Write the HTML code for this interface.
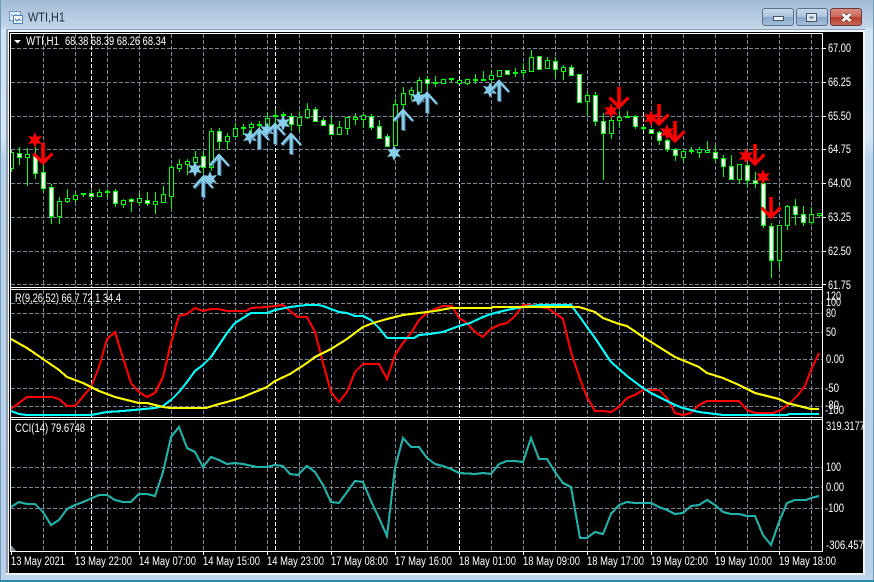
<!DOCTYPE html>
<html><head><meta charset="utf-8"><style>
html,body{margin:0;padding:0;width:874px;height:582px;overflow:hidden;background:#bcd3ea}
svg{display:block}
text{font-family:"Liberation Sans",sans-serif;font-size:11.5px;fill:#fff}
.c{shape-rendering:crispEdges}
</style></head><body>
<svg width="874" height="582" viewBox="0 0 874 582" xmlns="http://www.w3.org/2000/svg">
<defs>
<linearGradient id="top" x1="0" y1="0" x2="0" y2="1"><stop offset="0" stop-color="#a3bbd6"/><stop offset="1" stop-color="#c4d7ea"/></linearGradient>
<linearGradient id="side" x1="0" y1="0" x2="0" y2="1"><stop offset="0" stop-color="#d2e2f2"/><stop offset=".2" stop-color="#d8e6f4"/><stop offset=".24" stop-color="#bad2ea"/><stop offset="1" stop-color="#b9d1ea"/></linearGradient>
<linearGradient id="btn" x1="0" y1="0" x2="0" y2="1"><stop offset="0" stop-color="#c9d9ea"/><stop offset=".48" stop-color="#adc3dc"/><stop offset=".52" stop-color="#88a6c8"/><stop offset="1" stop-color="#a6c2de"/></linearGradient>
<linearGradient id="cls" x1="0" y1="0" x2="0" y2="1"><stop offset="0" stop-color="#dc8f82"/><stop offset=".48" stop-color="#cc6a5c"/><stop offset=".52" stop-color="#b83c2c"/><stop offset="1" stop-color="#c86a58"/></linearGradient>
<polygon id="st" points="0,-8 1.9,-3.3 6.9,-4 3.8,0 6.9,4 1.9,3.3 0,8 -1.9,3.3 -6.9,4 -3.8,0 -6.9,-4 -1.9,-3.3"/>
<g id="dn" fill="none" stroke="#f00"><path stroke-width="3.6" d="M0 -21V-1"/><path stroke-width="3.2" d="M-9.5 -10.5L0 -1L9.5 -10.5"/></g>
<g id="up" fill="none"><g stroke="#4f7fa6" transform="translate(1,1)"><path stroke-width="3" d="M0 2V21"/><path stroke-width="2.2" d="M-9.5 11.5L0 1L9.5 11.5"/></g><g stroke="#87ceeb"><path stroke-width="3" d="M0 2V21"/><path stroke-width="2.4" d="M-9.5 11.5L0 1L9.5 11.5"/></g></g>
</defs>

<!-- window chrome -->
<rect width="874" height="582" fill="#bcd3ea"/>
<rect width="874" height="29" fill="url(#top)"/>
<rect x="0" y="28" width="7" height="545" fill="url(#side)"/>
<rect x="865" y="28" width="9" height="545" fill="url(#side)"/>
<rect x="0" y="0" width="1" height="582" fill="#6f9cb8"/>
<rect x="873" y="0" width="1" height="582" fill="#6f9cb8"/>
<rect x="0" y="580" width="874" height="2" fill="#2f8aa8"/>
<rect x="6" y="29" width="859" height="546" fill="#f2f6fa"/>
<rect x="6" y="29" width="859" height="1" fill="#8ea3b8"/>
<rect x="6" y="29" width="2" height="544" fill="#8f9fae"/>
<rect x="9" y="32" width="854" height="541" fill="#000"/>

<!-- title icon -->
<g class="c">
<rect x="9.5" y="11.5" width="11" height="9" fill="#dcebf8" stroke="#6f94bc"/>
<rect x="13.5" y="15.5" width="9" height="8" fill="#f4f9fe" stroke="#4b83bb"/>
<path d="M15 19l2 2 2-2 2 2" stroke="#3a78b8" fill="none"/>
<path d="M11 15h2m2 0h2" stroke="#6f94bc"/>
</g>
<text x="28" y="21.5" style="font-size:12.5px;fill:#1e2c3c" textLength="37" lengthAdjust="spacingAndGlyphs">WTI,H1</text>

<!-- buttons -->
<rect x="762.5" y="8.5" width="31" height="17" rx="2.5" fill="url(#btn)" stroke="#5d7189"/>
<rect x="773.5" y="16.5" width="10" height="4" fill="#eef3f8" stroke="#46586c" class="c"/>
<rect x="796.5" y="8.5" width="31" height="17" rx="2.5" fill="url(#btn)" stroke="#5d7189"/>
<rect x="806.5" y="13.5" width="10" height="8" fill="#dfe7ef" stroke="#46586c" class="c"/>
<rect x="809.5" y="16.5" width="4" height="2" fill="#64788e" class="c"/>
<rect x="830.5" y="8.5" width="31" height="17" rx="2.5" fill="url(#cls)" stroke="#6d3a40"/>
<path d="M842.5 14l8 7M850.5 14l-8 7" stroke="#4a3a3a" stroke-width="4.4" fill="none"/>
<path d="M842.5 14l8 7M850.5 14l-8 7" stroke="#f4f1ee" stroke-width="3" fill="none"/>

<!-- grid -->
<g class="c" fill="none" stroke="#778899" stroke-dasharray="4 2">
<path d="M11 48.5H822M11 82.5H822M11 116.5H822M11 149.5H822M11 183.5H822M11 217.5H822M11 251.5H822M11 284.5H822"/>
<path d="M11 303.5H822M11 313.5H822M11 332.5H822M11 359.5H822M11 388.5H822M11 406.5H822"/>
<path d="M11 467.5H822M11 487.5H822M11 508.5H822"/>
<path id="gv" d="M43.5 34V287M75.5 34V287M107.5 34V287M139.5 34V287M171.5 34V287M203.5 34V287M235.5 34V287M267.5 34V287M299.5 34V287M331.5 34V287M363.5 34V287M395.5 34V287M427.5 34V287M491.5 34V287M523.5 34V287M555.5 34V287M587.5 34V287M619.5 34V287M651.5 34V287M683.5 34V287M715.5 34V287M747.5 34V287M779.5 34V287M811.5 34V287"/>
<path d="M43.5 290V417M75.5 290V417M107.5 290V417M139.5 290V417M171.5 290V417M203.5 290V417M235.5 290V417M267.5 290V417M299.5 290V417M331.5 290V417M363.5 290V417M395.5 290V417M427.5 290V417M491.5 290V417M523.5 290V417M555.5 290V417M587.5 290V417M619.5 290V417M651.5 290V417M683.5 290V417M715.5 290V417M747.5 290V417M779.5 290V417M811.5 290V417"/>
<path d="M43.5 420V551M75.5 420V551M107.5 420V551M139.5 420V551M171.5 420V551M203.5 420V551M235.5 420V551M267.5 420V551M299.5 420V551M331.5 420V551M363.5 420V551M395.5 420V551M427.5 420V551M491.5 420V551M523.5 420V551M555.5 420V551M587.5 420V551M619.5 420V551M651.5 420V551M683.5 420V551M715.5 420V551M747.5 420V551M779.5 420V551M811.5 420V551"/>
<path stroke="#fff" d="M91.5 34V287M275.5 34V287M459.5 34V287M643.5 34V287M91.5 290V417M275.5 290V417M459.5 290V417M643.5 290V417M91.5 420V551M275.5 420V551M459.5 420V551M643.5 420V551"/>
</g>

<!-- candles -->
<g fill="none" stroke="#00ff00" stroke-width="1">
<path d="M11.5 150V172M19.5 147V165M27.5 148V186M35.5 147V179M43.5 160V192M51.5 184V224M59.5 197V224M67.5 189V203M75.5 192V203M83.5 193V197M91.5 189V199M99.5 189V197M107.5 189V198M115.5 189V207M123.5 199V208M131.5 198V212M139.5 193V205M147.5 192V206M155.5 192V214M163.5 186V202M171.5 165V209M179.5 159V172M187.5 159V175M195.5 151V165M203.5 151V174M211.5 128V171M219.5 128V150M227.5 133V150M235.5 123V137M243.5 124V135M251.5 122V133M259.5 121V133M267.5 113V128M275.5 109V125M283.5 112V122M291.5 113V131M299.5 111V132M307.5 103V119M315.5 107V121M323.5 118V126M331.5 117V134M339.5 121V135M347.5 117V135M355.5 113V125M363.5 114V128M371.5 114V130M379.5 120V139M387.5 134V147M395.5 99V146M403.5 87V110M411.5 87V100M419.5 77V95M427.5 76V90M435.5 76V87M443.5 79V83M451.5 79V83M459.5 80V84M467.5 79V85M475.5 74V84M483.5 71V80M491.5 70V82M499.5 70V76M507.5 70V75M515.5 68V77M523.5 63V77M531.5 50V72M539.5 56V69M547.5 57V69M555.5 57V78M563.5 65V80M571.5 65V76M579.5 74V102M587.5 92V116M595.5 92V126M603.5 113V180M611.5 113V139M619.5 111V128M627.5 111V118M635.5 115V129M643.5 126V131M651.5 129V133M659.5 131V145M667.5 139V152M675.5 148V161M683.5 148V162M691.5 147V154M699.5 147V158M707.5 141V153M715.5 145V162M723.5 155V177M731.5 155V180M739.5 164V183M747.5 163V187M755.5 172V188M763.5 183V228M771.5 223V278M779.5 225V269M787.5 205V230M795.5 199V225M803.5 206V226M811.5 207V225M819.5 213V218"/>
<path stroke-width="2" d="M81 194H86M105 192H110M241 128H246M257 125H262M273 116H278M281 115H286M433 83H438M449 79H454M473 80H478M481 80H486M513 73H518M625 117H630M641 128H646M689 151H694"/>
<path fill="#000" d="M11 152.5H13.5V168.5H11M25.5 154.5h4v3h-4zM57.5 201.5h4v15h-4zM65.5 198.5h4v3h-4zM73.5 195.5h4v4h-4zM97.5 192.5h4v4h-4zM121.5 200.5h4v4h-4zM137.5 198.5h4v4h-4zM153.5 201.5h4v3h-4zM161.5 194.5h4v8h-4zM169.5 167.5h4v29h-4zM177.5 164.5h4v4h-4zM185.5 161.5h4v3h-4zM193.5 157.5h4v5h-4zM209.5 131.5h4v36h-4zM225.5 136.5h4v5h-4zM233.5 128.5h4v8h-4zM249.5 124.5h4v3h-4zM265.5 118.5h4v7h-4zM297.5 117.5h4v8h-4zM305.5 109.5h4v8h-4zM337.5 127.5h4v7h-4zM345.5 117.5h4v11h-4zM353.5 117.5h4v2h-4zM361.5 115.5h4v4h-4zM393.5 104.5h4v41h-4zM401.5 93.5h4v11h-4zM409.5 90.5h4v4h-4zM417.5 80.5h4v12h-4zM441.5 79.5h4v4h-4zM457.5 80.5h4v3h-4zM465.5 79.5h4v4h-4zM489.5 75.5h4v4h-4zM497.5 70.5h4v6h-4zM521.5 70.5h4v2h-4zM529.5 57.5h4v14h-4zM545.5 60.5h4v8h-4zM561.5 67.5h4v4h-4zM585.5 95.5h4v6h-4zM609.5 120.5h4v13h-4zM617.5 117.5h4v3h-4zM681.5 151.5h4v6h-4zM697.5 149.5h4v3h-4zM705.5 150.5h4v2h-4zM737.5 164.5h4v15h-4zM777.5 225.5h4v35h-4zM785.5 206.5h4v19h-4zM809.5 214.5h4v8h-4zM817.5 213.5h4v2h-4z"/>
<path fill="#fff" d="M17.5 153.5h4v4h-4zM33.5 156.5h4v17h-4zM41.5 172.5h4v16h-4zM49.5 187.5h4v29h-4zM89.5 193.5h4v3h-4zM113.5 191.5h4v12h-4zM129.5 199.5h4v2h-4zM145.5 200.5h4v3h-4zM201.5 156.5h4v11h-4zM217.5 131.5h4v10h-4zM289.5 116.5h4v8h-4zM313.5 109.5h4v12h-4zM321.5 120.5h4v5h-4zM329.5 124.5h4v10h-4zM369.5 116.5h4v11h-4zM377.5 126.5h4v12h-4zM385.5 136.5h4v10h-4zM425.5 79.5h4v4h-4zM505.5 70.5h4v4h-4zM537.5 56.5h4v13h-4zM553.5 61.5h4v8h-4zM569.5 67.5h4v8h-4zM577.5 74.5h4v28h-4zM593.5 95.5h4v26h-4zM601.5 121.5h4v12h-4zM633.5 116.5h4v10h-4zM649.5 129.5h4v4h-4zM657.5 132.5h4v8h-4zM665.5 140.5h4v9h-4zM673.5 149.5h4v6h-4zM713.5 152.5h4v6h-4zM721.5 158.5h4v8h-4zM729.5 166.5h4v13h-4zM745.5 165.5h4v15h-4zM753.5 180.5h4v3h-4zM761.5 183.5h4v42h-4zM769.5 226.5h4v34h-4zM793.5 206.5h4v8h-4zM801.5 214.5h4v8h-4z"/>
</g>

<!-- objects -->
<g fill="#87ceeb">
<use href="#st" x="195" y="169"/><use href="#st" x="210" y="179"/><use href="#st" x="250" y="137"/><use href="#st" x="267" y="130"/><use href="#st" x="283" y="123"/><use href="#st" x="394" y="153"/><use href="#st" x="418" y="98"/><use href="#st" x="490" y="90"/>
</g>
<use href="#up" x="203" y="176"/><use href="#up" x="219" y="154"/><use href="#up" x="259" y="128"/><use href="#up" x="275" y="123"/><use href="#up" x="291" y="133"/><use href="#up" x="403" y="109"/><use href="#up" x="427" y="92"/><use href="#up" x="499" y="80"/>
<g fill="#f00">
<use href="#st" x="35" y="140"/><use href="#st" x="611" y="111"/><use href="#st" x="651" y="118"/><use href="#st" x="667" y="132"/><use href="#st" x="746" y="156"/><use href="#st" x="763" y="177"/>
</g>
<use href="#dn" x="43" y="164"/><use href="#dn" x="619" y="108"/><use href="#dn" x="659" y="125"/><use href="#dn" x="675" y="142"/><use href="#dn" x="755" y="165"/><use href="#dn" x="771" y="218"/>

<!-- sub-window indicator lines -->
<g class="c" fill="none" stroke-width="2.1">
<polyline stroke="#f00" points="11,409 27,397 52,397 59,399 67,406 75,406 91,387 99,367 107,339 115,332 123,358 131,383 139,392 147,397 155,393 163,377 171,343 179,316 187,314 195,308 203,311 211,309 219,309 227,311 246,311 251,308 267,307 283,305 290,311 298,317 307,317 315,332 323,363 331,392 339,402 347,392 355,372 363,364 379,364 387,379 395,355 403,343 411,333 419,320 427,313 435,309 443,306 452,306 459,318 467,323 475,332 483,337 491,329 499,325 507,323 515,316 523,305 531,305 539,307 547,308 555,313 563,319 571,352 580,379 587,397 595,411 603,411 611,412 619,407 627,398 635,395 643,390 659,390 667,398 675,413 683,415 691,413 699,405 707,401 739,401 747,410 755,413 773,413 781,410 789,404 797,396 805,386 811,370 819,353"/>
<polyline stroke="#0ff" points="11,411 19,414 27,415 91,415 107,412 123,411 155,408 163,406 171,400 179,392 187,382 195,371 203,365 211,357 219,345 227,333 235,323 251,313 267,313 275,310 290,307 298,306 307,305 318,305 323,306 331,309 339,312 347,313 355,316 363,316 371,320 379,328 387,338 414,338 419,335 430,334 443,332 451,329 459,326 470,323 483,317 491,314 507,310 523,307 539,305 571,305 580,317 587,327 595,338 603,350 611,362 619,369 627,376 643,388 651,393 667,401 675,405 683,408 699,412 715,414 723,415 787,415 789,414 819,414"/>
<polyline stroke="#ff0" points="11,339 27,348 43,359 59,370 67,377 83,383 99,391 115,397 139,403 147,403 163,407 171,408 206,408 219,404 227,402 243,397 267,387 275,381 290,374 307,363 315,357 331,349 347,339 363,327 373,323 387,319 403,315 419,313 435,311 451,308 491,308 493,307 579,307 595,312 603,318 619,324 627,326 643,337 659,347 675,357 699,367 707,373 723,378 739,385 755,393 763,395 779,399 787,403 795,405 811,409 819,409"/>
<polyline stroke="#20b2aa" points="11,507 19,502 27,504 35,504 43,512 51,525 59,520 67,509 75,505 83,502 99,495 107,495 115,500 123,502 131,502 139,494 147,494 155,496 163,472 171,437 179,427 187,448 195,452 203,467 211,457 219,460 227,464 235,463 243,464 257,467 267,467 275,465 283,466 290,474 298,475 307,466 315,472 323,485 331,502 339,503 347,492 355,481 363,482 371,501 379,518 387,536 395,468 403,438 411,447 419,447 427,458 435,464 443,466 451,469 459,473 475,474 483,473 491,474 499,464 507,461 515,461 523,462 531,438 539,459 547,459 555,472 563,483 571,487 580,538 587,538 595,532 603,534 611,514 619,505 627,502 635,503 651,503 659,507 667,510 675,514 683,513 691,506 699,505 707,500 715,505 723,512 731,514 739,514 747,516 755,516 763,535 771,545 779,522 787,503 795,500 806,500 811,498 819,496"/>
</g>

<!-- frames -->
<g class="c" fill="#fff">
<rect x="9" y="33" width="1" height="519" fill="#000"/>
<rect x="10" y="33" width="813" height="1"/>
<rect x="10" y="33" width="1" height="519"/>
<rect x="822" y="33" width="1" height="519"/>
<rect x="10" y="287" width="813" height="1"/>
<rect x="10" y="289" width="813" height="1"/>
<rect x="10" y="417" width="813" height="1"/>
<rect x="10" y="419" width="813" height="1"/>
<rect x="10" y="551" width="813" height="1"/>
<path d="M11 552h1v3h-1zM75 552h1v3h-1zM139 552h1v3h-1zM203 552h1v3h-1zM267 552h1v3h-1zM331 552h1v3h-1zM395 552h1v3h-1zM459 552h1v3h-1zM523 552h1v3h-1zM587 552h1v3h-1zM651 552h1v3h-1zM715 552h1v3h-1zM779 552h1v3h-1z"/>
<path d="M823 48h3v1h-3zM823 82h3v1h-3zM823 116h3v1h-3zM823 149h3v1h-3zM823 183h3v1h-3zM823 217h3v1h-3zM823 251h3v1h-3zM823 284h3v1h-3z"/>
</g>
<path d="M11 545L16 551H11Z" fill="#7f8ea3" class="c"/>
<path d="M14 40h7l-3.5 3.5z" fill="#fff"/>

<!-- legends -->
<text x="26" y="45" textLength="33" lengthAdjust="spacingAndGlyphs">WTI,H1</text>
<text x="65" y="45" textLength="101" lengthAdjust="spacingAndGlyphs">68.38 68.39 68.26 68.34</text>
<text x="15" y="302" textLength="106" lengthAdjust="spacingAndGlyphs">R(9,26,52) 66.7 72.1 34.4</text>
<text x="15" y="432" textLength="70" lengthAdjust="spacingAndGlyphs">CCI(14) 79.6748</text>

<!-- price labels -->
<text x="828" y="52" textLength="23" lengthAdjust="spacingAndGlyphs">67.00</text>
<text x="828" y="86" textLength="23" lengthAdjust="spacingAndGlyphs">66.25</text>
<text x="828" y="120" textLength="23" lengthAdjust="spacingAndGlyphs">65.50</text>
<text x="828" y="153" textLength="23" lengthAdjust="spacingAndGlyphs">64.75</text>
<text x="828" y="187" textLength="23" lengthAdjust="spacingAndGlyphs">64.00</text>
<text x="828" y="221" textLength="23" lengthAdjust="spacingAndGlyphs">63.25</text>
<text x="828" y="255" textLength="23" lengthAdjust="spacingAndGlyphs">62.50</text>
<text x="828" y="289" textLength="23" lengthAdjust="spacingAndGlyphs">61.75</text>

<text x="826" y="300" textLength="15" lengthAdjust="spacingAndGlyphs">120</text>
<text x="826" y="306" textLength="15" lengthAdjust="spacingAndGlyphs">100</text>
<text x="826" y="317" textLength="10" lengthAdjust="spacingAndGlyphs">80</text>
<text x="826" y="336" textLength="10" lengthAdjust="spacingAndGlyphs">50</text>
<text x="826" y="363" textLength="18" lengthAdjust="spacingAndGlyphs">0.00</text>
<text x="825" y="392" textLength="14" lengthAdjust="spacingAndGlyphs">-50</text>
<text x="825" y="409" textLength="14" lengthAdjust="spacingAndGlyphs">-80</text>
<text x="825" y="414" textLength="19" lengthAdjust="spacingAndGlyphs">-100</text>

<svg x="0" y="0" width="863" height="582">
<text x="826" y="430" textLength="39" lengthAdjust="spacingAndGlyphs">319.3177</text>
<text x="826" y="549" textLength="38" lengthAdjust="spacingAndGlyphs">-306.457</text>
</svg>
<text x="826" y="471" textLength="15" lengthAdjust="spacingAndGlyphs">100</text>
<text x="826" y="491" textLength="18" lengthAdjust="spacingAndGlyphs">0.00</text>
<text x="825" y="512" textLength="19" lengthAdjust="spacingAndGlyphs">-100</text>

<!-- time labels -->
<text x="11" y="565" textLength="54" lengthAdjust="spacingAndGlyphs">13 May 2021</text>
<text x="75" y="565" textLength="57" lengthAdjust="spacingAndGlyphs">13 May 22:00</text>
<text x="139" y="565" textLength="57" lengthAdjust="spacingAndGlyphs">14 May 07:00</text>
<text x="203" y="565" textLength="57" lengthAdjust="spacingAndGlyphs">14 May 15:00</text>
<text x="267" y="565" textLength="57" lengthAdjust="spacingAndGlyphs">14 May 23:00</text>
<text x="331" y="565" textLength="57" lengthAdjust="spacingAndGlyphs">17 May 08:00</text>
<text x="395" y="565" textLength="57" lengthAdjust="spacingAndGlyphs">17 May 16:00</text>
<text x="459" y="565" textLength="57" lengthAdjust="spacingAndGlyphs">18 May 01:00</text>
<text x="523" y="565" textLength="57" lengthAdjust="spacingAndGlyphs">18 May 09:00</text>
<text x="587" y="565" textLength="57" lengthAdjust="spacingAndGlyphs">18 May 17:00</text>
<text x="651" y="565" textLength="57" lengthAdjust="spacingAndGlyphs">19 May 02:00</text>
<text x="715" y="565" textLength="57" lengthAdjust="spacingAndGlyphs">19 May 10:00</text>
<text x="779" y="565" textLength="57" lengthAdjust="spacingAndGlyphs">19 May 18:00</text>
</svg>
</body></html>
